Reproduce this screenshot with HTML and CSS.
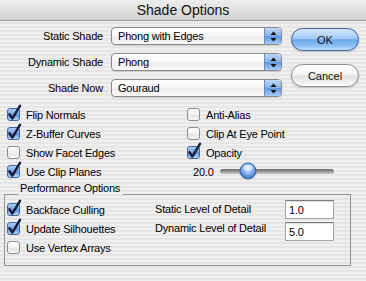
FILE: index.html
```html
<!DOCTYPE html>
<html lang="en">
<head>
<meta charset="utf-8">
<title>Shade Options</title>
<link rel="stylesheet" href="styles.css">
</head>
<body>
<svg class="defs" width="0" height="0">
  <defs>
    <linearGradient id="aquaBox" x1="0" y1="0" x2="0" y2="1">
      <stop offset="0" stop-color="#b7d0f2"/>
      <stop offset=".45" stop-color="#7aa8e4"/>
      <stop offset=".55" stop-color="#5d93dc"/>
      <stop offset="1" stop-color="#bfe0ff"/>
    </linearGradient>
    <linearGradient id="plainBox" x1="0" y1="0" x2="0" y2="1">
      <stop offset="0" stop-color="#ffffff"/>
      <stop offset=".5" stop-color="#f1f1f1"/>
      <stop offset=".55" stop-color="#e4e4e4"/>
      <stop offset="1" stop-color="#fafafa"/>
    </linearGradient>
    <radialGradient id="knob" cx=".5" cy=".35" r=".6">
      <stop offset="0" stop-color="#e6f2ff"/>
      <stop offset=".5" stop-color="#8ab8ee"/>
      <stop offset="1" stop-color="#3f78cc"/>
    </radialGradient>
    <g id="cb-on">
      <rect x=".5" y=".5" width="12" height="12" rx="2.5" fill="url(#aquaBox)" stroke="#46679c"/>
      <path d="M2.4 6.2 L5.3 10.6 L13 -2.2" fill="none" stroke="#161b38" stroke-width="2.4" stroke-linecap="round" stroke-linejoin="round"/>
    </g>
    <g id="cb-off">
      <rect x=".5" y=".5" width="12" height="12" rx="2.5" fill="url(#plainBox)" stroke="#8c8c8c"/>
    </g>
  </defs>
</svg>

<div class="titlebar">Shade Options</div>

<!-- ===== shading popups + buttons ===== -->
<div class="top">
  <div class="shades">
    <label class="shade-label">Static Shade</label>
    <div class="popup"><span class="popup-text">Phong with Edges</span><span class="popup-arrows"><svg width="7" height="11" viewBox="0 0 7 11"><path d="M3.5 0.5 L6.5 4 L0.5 4 Z M0.5 7 L6.5 7 L3.5 10.5 Z" fill="#111"/></svg></span></div>
    <label class="shade-label">Dynamic Shade</label>
    <div class="popup"><span class="popup-text">Phong</span><span class="popup-arrows"><svg width="7" height="11" viewBox="0 0 7 11"><path d="M3.5 0.5 L6.5 4 L0.5 4 Z M0.5 7 L6.5 7 L3.5 10.5 Z" fill="#111"/></svg></span></div>
    <label class="shade-label">Shade Now</label>
    <div class="popup"><span class="popup-text">Gouraud</span><span class="popup-arrows"><svg width="7" height="11" viewBox="0 0 7 11"><path d="M3.5 0.5 L6.5 4 L0.5 4 Z M0.5 7 L6.5 7 L3.5 10.5 Z" fill="#111"/></svg></span></div>
  </div>
  <div class="buttons">
    <button class="btn btn-default">OK</button>
    <button class="btn">Cancel</button>
  </div>
</div>

<!-- ===== display checkboxes ===== -->
<div class="checks">
  <div class="check"><svg class="box" width="13" height="13"><use href="#cb-on"/></svg>Flip Normals</div>
  <div class="check"><svg class="box" width="13" height="13"><use href="#cb-off"/></svg>Anti-Alias</div>
  <div class="check"><svg class="box" width="13" height="13"><use href="#cb-on"/></svg>Z-Buffer Curves</div>
  <div class="check"><svg class="box" width="13" height="13"><use href="#cb-off"/></svg>Clip At Eye Point</div>
  <div class="check"><svg class="box" width="13" height="13"><use href="#cb-off"/></svg>Show Facet Edges</div>
  <div class="check"><svg class="box" width="13" height="13"><use href="#cb-on"/></svg>Opacity</div>
  <div class="check"><svg class="box" width="13" height="13"><use href="#cb-on"/></svg>Use Clip Planes</div>
  <div class="slider">
    <span class="slider-value">20.0</span>
    <div class="track">
      <svg class="thumb" width="18" height="18" viewBox="0 0 18 18"><circle cx="9" cy="9" r="8" fill="url(#knob)" stroke="#3a5f9c"/><ellipse cx="9" cy="5.5" rx="4.5" ry="2.5" fill="#fff" opacity=".55"/></svg>
    </div>
  </div>
</div>

<!-- ===== performance group ===== -->
<div class="group">
  <div class="group-head">
    <span class="rule rule-start"></span>
    <span class="group-title">Performance Options</span>
    <span class="rule"></span>
  </div>
  <div class="group-body">
    <div class="perf-checks">
      <div class="check"><svg class="box" width="13" height="13"><use href="#cb-on"/></svg>Backface Culling</div>
      <div class="check"><svg class="box" width="13" height="13"><use href="#cb-on"/></svg>Update Silhouettes</div>
      <div class="check"><svg class="box" width="13" height="13"><use href="#cb-off"/></svg>Use Vertex Arrays</div>
    </div>
    <div class="detail-labels">
      <div class="detail-label">Static Level of Detail</div>
      <div class="detail-label">Dynamic Level of Detail</div>
    </div>
    <div class="detail-fields">
      <div class="field">1.0</div>
      <div class="field">5.0</div>
    </div>
  </div>
</div>
</body>
</html>
```
FILE: styles.css
```css
/* ==== base ==== */
*,*::before,*::after{box-sizing:border-box;margin:0;padding:0}
html,body{width:366px;height:281px;overflow:hidden}
body{
	font-family:"Liberation Sans",Arial,sans-serif;
	font-size:11px;letter-spacing:-.2px;color:#000;
	background:repeating-linear-gradient(to bottom,#efefef 0,#efefef 2px,#e6e6e6 2px,#e6e6e6 4px);
}
.defs{position:absolute;width:0;height:0}

/* ==== title bar ==== */
.titlebar{
	height:21px;line-height:20px;text-align:center;
	font-size:14px;letter-spacing:0;color:#111;
	background:linear-gradient(#ededed,#d3d3d3);
	border-bottom:1px solid #9b9b9b;
}

/* ==== popups / buttons ==== */
.top{display:flex;padding-top:6px}
.shades{
	display:grid;grid-template-columns:103px 171px;grid-auto-rows:18px;
	column-gap:8px;row-gap:8px;
}
.shade-label{text-align:right;line-height:18px}
.popup{
	display:flex;height:18px;
	border:1px solid #8a8a8a;border-radius:4px;overflow:hidden;
	background:linear-gradient(#ffffff,#f6f6f6 50%,#ececec 55%,#fafafa);
	box-shadow:0 1px 1px rgba(0,0,0,.12);
}
.popup-text{flex:1;padding-left:6px;line-height:16px}
.popup-arrows{
	width:17px;display:flex;align-items:center;justify-content:center;
	border-left:1px solid #6c8ec4;
	background:linear-gradient(#c0d8f6,#86b2ea 48%,#5f95dd 52%,#a6cff9);
}

.buttons{display:flex;flex-direction:column;gap:13px;margin-left:9px;padding-top:1px}
.btn{
	width:68px;height:23px;border-radius:12px;
	font:inherit;font-size:11px;color:#111;
	border:1px solid #8c8c8c;
	background:linear-gradient(#ffffff,#f5f5f5 45%,#e2e2e2 52%,#f1f1f1 85%,#ffffff);
	box-shadow:0 1px 2px rgba(0,0,0,.18);
}
.btn-default{
	border-color:#3d619e;
	background:linear-gradient(#d6e8fc,#a3c8f2 45%,#6ea6ea 52%,#8dc1f6 82%,#c6e4ff);
}

/* ==== checkboxes ==== */
.checks{
	display:grid;grid-template-columns:180px 1fr;grid-auto-rows:19px;
	padding:0 0 0 7px;margin-top:8px;
}
.check{display:flex;align-items:center;gap:6px;white-space:nowrap}
.box{flex:none;overflow:visible}

.slider{display:flex;align-items:center;gap:6px;padding-left:6px}
.track{
	position:relative;width:114px;height:5px;border-radius:3px;
	background:linear-gradient(#6c6c6c,#9a9a9a 55%,#cfcfcf);
}
.thumb{position:absolute;left:19px;top:-7px}

/* ==== performance group ==== */
.group{margin:3px 0 0 4px;width:347px}
.group-head{display:flex;align-items:flex-end;height:11px}
.rule{flex:1;border-bottom:1px solid #959595}
.rule-start{flex:none;width:14px}
.group-title{line-height:11px;padding:0 3px 0 2px;position:relative;top:-1px}
.group-body{
	display:flex;height:71px;padding:5px 0 0 2px;
	border:1px solid #959595;border-top:none;
}
.perf-checks{width:148px;display:flex;flex-direction:column}
.perf-checks .check{height:19px}
.detail-labels{width:130px;display:flex;flex-direction:column}
.detail-label{height:19px;line-height:19px}
.detail-fields{display:flex;flex-direction:column;gap:3px}
.field{
	width:49px;height:19px;padding-left:3px;line-height:18px;font-size:11px;
	background:#fff;border:1px solid #a4a4a4;border-top-color:#7a7a7a;
	box-shadow:inset 0 1px 1px rgba(0,0,0,.12);
}
```
